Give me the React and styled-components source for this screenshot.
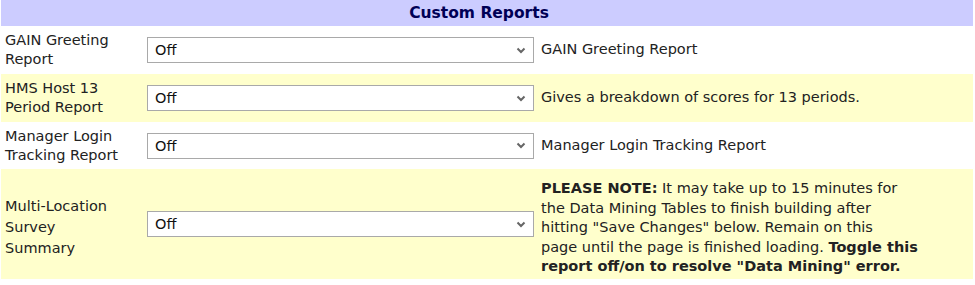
import React from "react";
import styled, { createGlobalStyle } from "styled-components";

const Global = createGlobalStyle`
  html, body { margin: 0; padding: 0; background: #fff; }
  body { font-family: "DejaVu Sans", Verdana, sans-serif; font-size: 14.5px; color: #222; }
`;

const Panel = styled.div`
  width: 972px;
  margin-left: 1px;
  display: grid;
  grid-template-columns: 141px 396px 1fr;
`;

const Header = styled.div`
  grid-column: 1 / -1;
  height: 26px;
  background: #ccccff;
  display: flex;
  align-items: center;
  justify-content: center;
  padding-right: 16px;
  font-weight: bold;
  font-size: 15.5px;
  color: #000055;
`;

const Row = styled.div`
  display: contents;
  & > div {
    background: ${(p) => (p.$alt ? "#ffffcc" : "#ffffff")};
    min-height: ${(p) => p.$h}px;
  }
`;

const LabelCell = styled.div`
  display: flex;
  align-items: center;
  padding-left: 4px;
  padding-top: ${(p) => p.$shift || 0}px;
  box-sizing: border-box;
  line-height: ${(p) => p.$lh || 19}px;
  white-space: nowrap;
`;

const SelectCell = styled.div`
  display: flex;
  align-items: center;
  padding-left: 5px;
`;

const DescCell = styled.div`
  display: flex;
  align-items: center;
  padding-left: 3px;
  padding-top: ${(p) => p.$shift || 0}px;
  box-sizing: border-box;
  line-height: 19.5px;
  white-space: nowrap;
`;

const SelectBox = styled.div`
  width: 387px;
  height: 26px;
  box-sizing: border-box;
  border: 1px solid #a9a9a9;
  background: #fff;
  display: flex;
  align-items: center;
  justify-content: space-between;
  padding: 0 7px 0 7px;
  color: #111;
`;

const Chevron = () => (
  <svg width="10" height="7" viewBox="0 0 10 7">
    <path d="M1.5 1.5 L5 5 L8.5 1.5" fill="none" stroke="#666" strokeWidth="2" />
  </svg>
);

const Lines = ({ items }) => (
  <span>
    {items.map((l, j) => (
      <React.Fragment key={j}>
        {j > 0 && <br />}
        {l}
      </React.Fragment>
    ))}
  </span>
);

const rows = [
  { label: ["GAIN Greeting", "Report"], desc: ["GAIN Greeting Report"], h: 48 },
  { label: ["HMS Host 13", "Period Report"], desc: ["Gives a breakdown of scores for 13 periods."], h: 48, alt: true },
  { label: ["Manager Login", "Tracking Report"], desc: ["Manager Login Tracking Report"], h: 47 },
  {
    label: ["Multi-Location", "Survey", "Summary"],
    lh: 21,
    h: 110,
    alt: true,
    labelShift: 6,
    descShift: 8,
    desc: [
      <><b>PLEASE NOTE:</b> It may take up to 15 minutes for</>,
      "the Data Mining Tables to finish building after",
      'hitting "Save Changes" below. Remain on this',
      <>page until the page is finished loading. <b>Toggle this</b></>,
      <b>report off/on to resolve "Data Mining" error.</b>,
    ],
  },
];

export default function App() {
  return (
    <>
      <Global />
      <Panel>
        <Header>Custom Reports</Header>
        {rows.map((r, i) => (
          <Row key={i} $alt={r.alt} $h={r.h}>
            <LabelCell $lh={r.lh} $shift={r.labelShift}>
              <Lines items={r.label} />
            </LabelCell>
            <SelectCell>
              <SelectBox>
                <span>Off</span>
                <Chevron />
              </SelectBox>
            </SelectCell>
            <DescCell $shift={r.descShift}>
              <Lines items={r.desc} />
            </DescCell>
          </Row>
        ))}
      </Panel>
    </>
  );
}
